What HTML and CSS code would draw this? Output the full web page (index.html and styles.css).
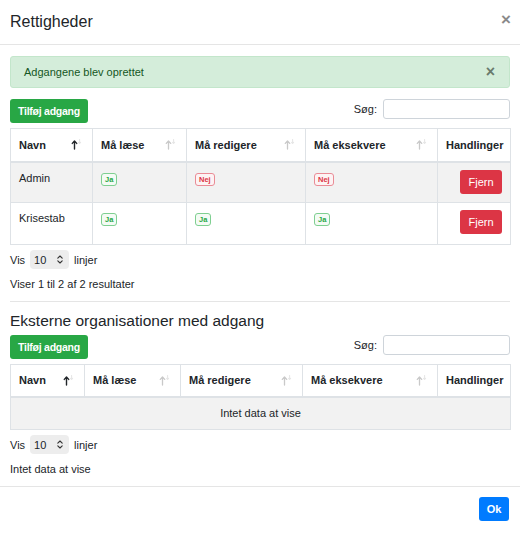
FILE: index.html
```html
<!DOCTYPE html>
<html lang="da">
<head>
<meta charset="utf-8">
<title>Rettigheder</title>
<link rel="stylesheet" href="styles.css">
</head>
<body>
<div class="modal">
  <div class="modal-header">
    <h5 class="modal-title">Rettigheder</h5>
    <span class="close">&times;</span>
  </div>
  <div class="modal-body">
    <div class="alert">
      <span>Adgangene blev oprettet</span>
      <span class="alert-close">&times;</span>
    </div>
    <div class="toolbar">
      <button class="btn btn-green">Tilføj adgang</button>
      <label class="search">Søg: <span class="input"></span></label>
    </div>
    <table class="dt t1">
      <colgroup><col class="c1"><col class="c2"><col class="c3"><col class="c4"><col class="c5"></colgroup>
      <thead>
        <tr>
          <th><div class="th"><span>Navn</span><svg class="sort on" width="11" height="11" viewBox="0 0 11 11"><path class="u" d="M3.5 10V2.2M1.3 4.4L3.5 2L5.7 4.4"/><path class="d" d="M8.6 0.5V4.5M7.6 3.3L8.6 4.5L9.6 3.3"/></svg></div></th>
          <th><div class="th"><span>Må læse</span><svg class="sort" width="11" height="11" viewBox="0 0 11 11"><path class="u" d="M3.5 10V2.2M1.3 4.4L3.5 2L5.7 4.4"/><path class="d" d="M8.6 0.5V4.5M7.6 3.3L8.6 4.5L9.6 3.3"/></svg></div></th>
          <th><div class="th"><span>Må redigere</span><svg class="sort" width="11" height="11" viewBox="0 0 11 11"><path class="u" d="M3.5 10V2.2M1.3 4.4L3.5 2L5.7 4.4"/><path class="d" d="M8.6 0.5V4.5M7.6 3.3L8.6 4.5L9.6 3.3"/></svg></div></th>
          <th><div class="th"><span>Må eksekvere</span><svg class="sort" width="11" height="11" viewBox="0 0 11 11"><path class="u" d="M3.5 10V2.2M1.3 4.4L3.5 2L5.7 4.4"/><path class="d" d="M8.6 0.5V4.5M7.6 3.3L8.6 4.5L9.6 3.3"/></svg></div></th>
          <th>Handlinger</th>
        </tr>
      </thead>
      <tbody>
        <tr class="odd">
          <td>Admin</td>
          <td><span class="badge yes">Ja</span></td>
          <td><span class="badge no">Nej</span></td>
          <td><span class="badge no">Nej</span></td>
          <td class="act"><button class="btn btn-red">Fjern</button></td>
        </tr>
        <tr>
          <td>Krisestab</td>
          <td><span class="badge yes">Ja</span></td>
          <td><span class="badge yes">Ja</span></td>
          <td><span class="badge yes">Ja</span></td>
          <td class="act"><button class="btn btn-red">Fjern</button></td>
        </tr>
      </tbody>
    </table>
    <div class="length">Vis <span class="select"><span>10</span><svg class="chev" width="6" height="9" viewBox="0 0 6 9"><path d="M0.8 3.2L3 1L5.2 3.2M0.8 5.8L3 8L5.2 5.8"/></svg></span> linjer</div>
    <div class="info">Viser 1 til 2 af 2 resultater</div>
    <hr class="sep">
    <h5 class="section-title">Eksterne organisationer med adgang</h5>
    <div class="toolbar t2bar">
      <button class="btn btn-green">Tilføj adgang</button>
      <label class="search">Søg: <span class="input"></span></label>
    </div>
    <table class="dt t2">
      <colgroup><col class="d1"><col class="d2"><col class="d3"><col class="d4"><col class="d5"></colgroup>
      <thead>
        <tr>
          <th><div class="th"><span>Navn</span><svg class="sort on" width="11" height="11" viewBox="0 0 11 11"><path class="u" d="M3.5 10V2.2M1.3 4.4L3.5 2L5.7 4.4"/><path class="d" d="M8.6 0.5V4.5M7.6 3.3L8.6 4.5L9.6 3.3"/></svg></div></th>
          <th><div class="th"><span>Må læse</span><svg class="sort" width="11" height="11" viewBox="0 0 11 11"><path class="u" d="M3.5 10V2.2M1.3 4.4L3.5 2L5.7 4.4"/><path class="d" d="M8.6 0.5V4.5M7.6 3.3L8.6 4.5L9.6 3.3"/></svg></div></th>
          <th><div class="th"><span>Må redigere</span><svg class="sort" width="11" height="11" viewBox="0 0 11 11"><path class="u" d="M3.5 10V2.2M1.3 4.4L3.5 2L5.7 4.4"/><path class="d" d="M8.6 0.5V4.5M7.6 3.3L8.6 4.5L9.6 3.3"/></svg></div></th>
          <th><div class="th"><span>Må eksekvere</span><svg class="sort" width="11" height="11" viewBox="0 0 11 11"><path class="u" d="M3.5 10V2.2M1.3 4.4L3.5 2L5.7 4.4"/><path class="d" d="M8.6 0.5V4.5M7.6 3.3L8.6 4.5L9.6 3.3"/></svg></div></th>
          <th>Handlinger</th>
        </tr>
      </thead>
      <tbody>
        <tr class="odd"><td colspan="5" class="empty">Intet data at vise</td></tr>
      </tbody>
    </table>
    <div class="length">Vis <span class="select"><span>10</span><svg class="chev" width="6" height="9" viewBox="0 0 6 9"><path d="M0.8 3.2L3 1L5.2 3.2M0.8 5.8L3 8L5.2 5.8"/></svg></span> linjer</div>
    <div class="info">Intet data at vise</div>
  </div>
  <div class="modal-footer">
    <button class="btn btn-blue">Ok</button>
  </div>
</div>
</body>
</html>
```
FILE: styles.css
```css
* { box-sizing: border-box; }
html, body { margin: 0; padding: 0; background: #fff; }
body {
  font-family: "Liberation Sans", Arial, Helvetica, sans-serif;
  font-size: 11px;
  color: #212529;
}
.modal { width: 520px; height: 533px; display: flex; flex-direction: column; }
.modal-header {
  height: 45px;
  border-bottom: 1px solid #e5e5e5;
  display: flex;
  align-items: center;
  justify-content: space-between;
  padding: 0 10px 0 10px;
}
.modal-title { margin: 0; font-size: 16px; font-weight: 500; }
.close { font-size: 17px; font-weight: 700; color: #8a8a8a; line-height: 1; margin-top: -6px; margin-right: -1px; }
.modal-body { padding: 11px 10px 0 10px; flex: 1; }
.alert {
  height: 32px;
  background: #d4edda;
  border: 1px solid #c3e6cb;
  border-radius: 3px;
  color: #155724;
  display: flex;
  align-items: center;
  justify-content: space-between;
  padding: 0 14px 0 13px;
  font-size: 11px;
}
.alert-close { font-size: 16px; font-weight: 700; color: #6a7a6d; line-height: 1; }
.toolbar { display: flex; justify-content: space-between; align-items: flex-start; margin-top: 11px; height: 24px; }
.btn {
  border: 0;
  font-family: inherit;
  font-size: 11px;
  font-weight: 700;
  color: #fff;
  border-radius: 3px;
  height: 24px;
  padding: 0;
  white-space: nowrap;
  cursor: pointer;
}
.btn-green { background: #28a745; width: 78px; font-size: 10.5px; letter-spacing: -0.25px; }
.btn-red { background: #dc3545; width: 42px; font-weight: 400; }
.btn-blue { background: #007bff; width: 30px; }
.search { display: flex; align-items: center; gap: 6px; font-size: 11px; }
.input { display: block; width: 127px; height: 20px; border: 1px solid #ced4da; border-radius: 3px; background: #fff; }
.dt {
  width: 500px;
  table-layout: fixed;
  border-collapse: collapse;
  margin-top: 5px;
  border: 1px solid #dee2e6;
}
.c1 { width: 82px; } .c2 { width: 94px; } .c3 { width: 119px; } .c4 { width: 132px; } .c5 { width: 73px; }
.d1 { width: 74px; } .d2 { width: 96px; } .d3 { width: 122px; } .d4 { width: 135px; } .d5 { width: 73px; }
.dt th, .dt td { border: 1px solid #dee2e6; text-align: left; vertical-align: top; }
.dt th { height: 33px; padding: 0 8px; font-weight: 700; vertical-align: middle; border-bottom: 2px solid #dee2e6; }
.t2 th { height: 32px; }
.th { display: flex; justify-content: space-between; align-items: center; }
.sort { display: block; margin-right: 2px; fill: none; stroke-width: 1.3; stroke-linecap: round; stroke-linejoin: round; }
.sort .u { stroke: #c9c9c9; }
.sort .d { stroke: #e6e6e6; stroke-width: 1.1; }
.sort.on .u { stroke: #212529; stroke-width: 1.4; }
.dt td { padding: 9px 8px 0 8px; height: 41px; }
.t1 tbody tr:last-child td { height: 42px; }
.dt tr.odd td { background: #f2f2f2; }
.dt td.act { text-align: right; padding-top: 7px; }
.dt td.empty { text-align: center; height: 33px; vertical-align: middle; padding: 0; }
.badge {
  display: inline-block;
  font-size: 7.5px;
  font-weight: 700;
  line-height: 11px;
  padding: 0 3px;
  border-radius: 3px;
  margin-top: 1px;
}
.badge.yes { color: #28a745; border: 1px solid #7fcf91; background: #f4fbf5; }
.badge.no { color: #dc3545; border: 1px solid #ea8c96; background: #fdf3f4; }
.length { display: flex; align-items: center; gap: 5px; margin-top: 5px; height: 19px; }
.select {
  display: flex;
  align-items: center;
  justify-content: space-between;
  width: 39px;
  height: 19px;
  background: #ededed;
  border-radius: 4px;
  padding: 0 6px 0 4px;
}
.chev { display: block; fill: none; stroke: #333; stroke-width: 1.1; stroke-linecap: round; stroke-linejoin: round; }
.info { margin-top: 9px; height: 13px; line-height: 13px; }
.sep { border: 0; border-top: 1px solid #e5e5e5; margin: 10px 0 0 0; }
.section-title { margin: 9px 0 0 0; font-size: 15.5px; font-weight: 500; line-height: 20px; }
.t2bar { margin-top: 4px; }
.modal-footer {
  border-top: 1px solid #e5e5e5;
  height: 47px;
  display: flex;
  justify-content: flex-end;
  align-items: flex-start;
  padding: 10px 11px 0 0;
}
```
